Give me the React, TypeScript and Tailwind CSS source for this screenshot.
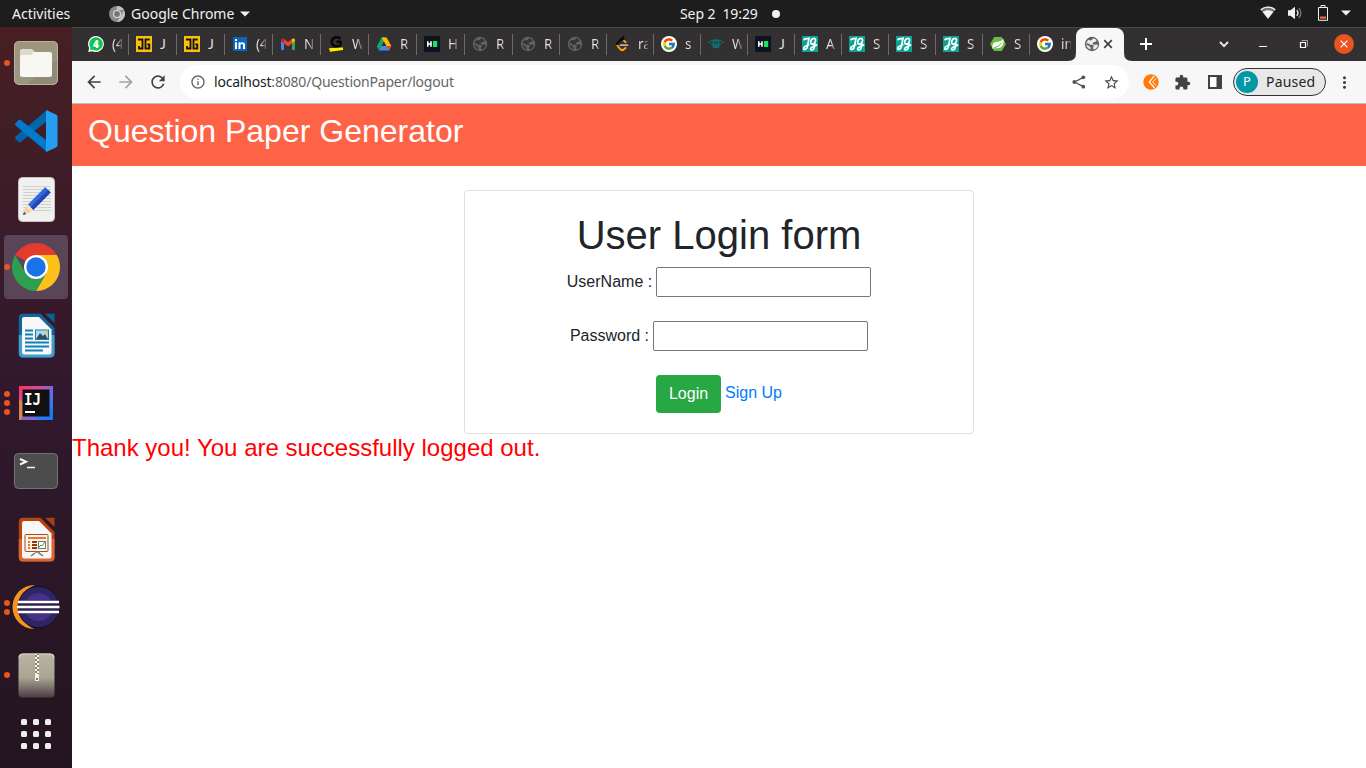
import type { ReactNode } from "react";
import { MdArrowBack, MdArrowForward, MdRefresh, MdInfoOutline, MdStarBorder, MdExtension, MdMoreVert } from "react-icons/md";
import { FcGoogle } from "react-icons/fc";

const WhatsApp = () => (
  <svg width="16" height="16" viewBox="0 0 16 16">
    <path d="M8 0a8 8 0 1 1-3.6 15.2L.3 16l.8-4A8 8 0 0 1 8 0z" fill="#fff" />
    <path d="M8 1.3a6.7 6.7 0 1 1-3.5 12.3L2 14.2l.5-2.4A6.7 6.7 0 0 1 8 1.3z" fill="#12c350" />
    <text x="8" y="11.6" textAnchor="middle" fontFamily="Open Sans, sans-serif" fontWeight="800" fontSize="10" fill="#fff">4</text>
  </svg>
);
const JavaGuides = () => (
  <svg width="16" height="16" viewBox="0 0 16 16">
    <rect width="16" height="16" fill="#fdc00a" />
    <path d="M2 3.500h4.500v9H3v-2.500M13.800 3.500H9.500v9h3.800V8.500h-2" fill="none" stroke="#151515" strokeWidth="1.900" />
  </svg>
);
const LinkedIn = () => (
  <svg width="16" height="16" viewBox="0 0 16 16">
    <rect x="1" y="1" width="14" height="14" rx="1" fill="#0a66c2" />
    <path d="M3 6.2h2V13H3zM3 3h2v2H3zM6.5 6.2h1.9v1c1-1.6 4.6-1.7 4.6 1.8v4h-2V9.5c0-2-2.5-1.8-2.5 0V13h-2z" fill="#fff" />
  </svg>
);
const Gmail = () => (
  <svg width="16" height="16" viewBox="0 0 16 16">
    <path d="M1 5l3 2v7H2a1 1 0 0 1-1-1z" fill="#4285f4" />
    <path d="M15 5l-3 2v7h2a1 1 0 0 0 1-1z" fill="#34a853" />
    <path d="M1 5V4c0-1.4 1.5-2 2.6-1.2L4 3v4.3L1 5z" fill="#c5221f" />
    <path d="M15 5V4c0-1.4-1.5-2-2.6-1.2L12 3v4.3L15 5z" fill="#fbbc04" />
    <path d="M4 3l4 3 4-3v4.4l-4 3-4-3z" fill="#ea4335" />
  </svg>
);
const Grepper = () => (
  <svg width="16" height="16" viewBox="0 0 16 16">
    <path d="M12.5 2.8C9.500 0 3.800 1 3.800 5.800c0 4.800 5.600 5.700 8.700 3.300V5.700H8.400" fill="none" stroke="#080808" strokeWidth="2.500" />
    <path d="M1 12.300l14-.9v2.600l-13 1.700z" fill="#fff000" />
  </svg>
);
const Drive = () => (
  <svg width="16" height="16" viewBox="0 0 16 16">
    <path d="M5.5 1.5h5L5.3 10.2 3 14.4.8 10.2z" fill="#11a861" />
    <path d="M5.5 1.5h5l4.8 8.5h-5z" fill="#ffbb00" />
    <path d="M3 14.4L5.4 10h9.9L13 14.4z" fill="#4688f4" />
    <path d="M10.4 10h4.9L13 14.2z" fill="#ea4335" />
    <path d="M8 6l2.3 4H5.6z" fill="#333031" />
  </svg>
);
const HackerRank = () => (
  <svg width="16" height="16" viewBox="0 0 16 16">
    <rect width="16" height="16" fill="#0b1420" />
    <path d="M3.8 5.3v5.4M7 5.3v5.4M3.8 8H7" stroke="#fff" strokeWidth="1.6" />
    <rect x="9" y="5" width="4.2" height="6" fill="#12e85f" />
  </svg>
);
const Globe = ({ color, land }: { color: string; land: string }) => (
  <svg width="16" height="16" viewBox="0 0 16 16">
    <circle cx="8" cy="8" r="7.200" fill={color} />
    <path d="M9.200 2.200c1.400.3 2.600 1 3.500 2.100l-1.200 1.500-2 .5-1 1.400 1.700 1 3-.2.800 1.200c-.7 1.800-2.200 3.300-4.300 3.800l-.9-1.700 1.300-1.900-1.500-1.200H6.300L3.700 7 2.300 8.400C2.400 6.500 3.200 4.900 4.500 3.800l1.600.6 1.700-.5z" fill={land} opacity=".92" />
    <path d="M2.300 8.600l3 1.500 1.400 1.600-.3 1.800C4 12.800 2.500 11 2.300 8.600z" fill={land} opacity=".85" />
  </svg>
);
const DimGlobe = () => <Globe color="#5f6368" land="#333031" />;
const LeetCode = () => (
  <svg width="16" height="16" viewBox="0 0 16 16">
    <path d="M9.5 1L3.5 7c-1 1-1 2.2 0 3.2" fill="none" stroke="#090909" strokeWidth="2" strokeLinecap="round" />
    <path d="M6 4.4l2-1c1-.3 2 .5 3 1.4" fill="none" stroke="#090909" strokeWidth="1.7" />
    <path d="M3.3 9.7l3.2 3.6c1 1 2.5 1 3.5 0l1.5-1.4M11.5 6.1L10 4.8" fill="none" stroke="#ffa116" strokeWidth="2" strokeLinecap="round" />
    <path d="M6.5 9.2h7" stroke="#b3b3b3" strokeWidth="1.7" strokeLinecap="round" />
  </svg>
);
const Google = () => (
  <span className="flex size-4 items-center justify-center rounded-full bg-white"><FcGoogle size={14} /></span>
);
const Eye = () => (
  <svg width="16" height="16" viewBox="0 0 16 16" fill="none" stroke="#087b7d">
    <path d="M.4 6.6C3.4 3 12.6 3 15.6 6.6M1.5 5.800c3 4.800 10 4.800 13 0" strokeWidth="1" />
    <circle cx="8" cy="7.700" r="3" strokeWidth="1.200" /><circle cx="8" cy="7.700" r="1" strokeWidth="1" />
    <path d="M4.300 10.500l2 1.300 1.700-.7 1.700.7 2-1.300" />
  </svg>
);
const Jg = () => (
  <svg width="16" height="16" viewBox="0 0 16 16">
    <rect width="16" height="16" fill="#0aa395" />
    <g fill="none" stroke="#fff" strokeWidth="1.7" strokeLinecap="round">
      <path d="M2 3.600c1.400-1.500 3.600-.8 5-1.200L5.400 10.400c-.5 3.400-4 4-3.700 1.700.3-1.600 3-2.300 5.100-3.500" />
      <path d="M13.500 4.800c.8-3.800-4.700-2.800-4.800 1.300 0 3.400 3.700 2.300 4.400-.4l-1 6.200c-.5 2.600-3.700 2.700-3.500.8.2-1.800 4-2.200 6-3.700" />
    </g>
  </svg>
);
const Spring = () => (
  <svg width="16" height="16" viewBox="0 0 16 16">
    <path d="M4.200 1h7.600L16 8l-4.200 7H4.200L0 8z" fill="#68bd45" />
    <path d="M13.400 2.700c.9 5.200-1 9.500-6 9.500H3.600l-1 .8c-.9-4.800 1-7.200 4.800-7.300 3-.1 4.800-.9 6-3z" fill="#fff" />
    <path d="M3.600 12c3.600-1 6.500-2.600 8-5.300" stroke="#68bd45" fill="none" />
  </svg>
);

type Tab = { icon: ReactNode; label: string };
const tabs: Tab[] = [
  { icon: <WhatsApp />, label: "(4" },
  { icon: <JavaGuides />, label: "J" },
  { icon: <JavaGuides />, label: "J" },
  { icon: <LinkedIn />, label: "(4" },
  { icon: <Gmail />, label: "N" },
  { icon: <Grepper />, label: "W" },
  { icon: <Drive />, label: "R" },
  { icon: <HackerRank />, label: "H" },
  { icon: <DimGlobe />, label: "R" },
  { icon: <DimGlobe />, label: "R" },
  { icon: <DimGlobe />, label: "R" },
  { icon: <LeetCode />, label: "ra" },
  { icon: <Google />, label: "s" },
  { icon: <Eye />, label: "W" },
  { icon: <HackerRank />, label: "J" },
  { icon: <Jg />, label: "A" },
  { icon: <Jg />, label: "S" },
  { icon: <Jg />, label: "S" },
  { icon: <Jg />, label: "S" },
  { icon: <Spring />, label: "S" },
  { icon: <Google />, label: "in" },
];

function TopBar() {
  return (
    <div className="flex h-[27px] shrink-0 items-center bg-[#1d1d1d] text-[14px] text-[#f2f2f2]">
      <span className="w-[97px] pl-3">Activities</span>
      <span className="flex w-[571px] items-center pl-3">
        <svg width="16" height="16" viewBox="0 0 16 16">
          <circle cx="8" cy="8" r="8" fill="#8b8b8b" />
          <path d="M8 0a8 8 0 0 1 7 4.1H8zM15 4.2A8 8 0 0 1 8 16l3.7-6z" fill="#c2c2c2" />
          <circle cx="8" cy="8" r="4" fill="#dedede" /><circle cx="8" cy="8" r="2.9" fill="#777" />
        </svg>
        <span className="ml-[6px] w-[105px] whitespace-nowrap">Google Chrome</span>
        <svg className="ml-[3px]" width="12" height="6" viewBox="0 0 12 6"><path d="M1 .5h10L6 5.5z" fill="#f2f2f2" /></svg>
      </span>
      <span className="w-[80px] pl-3 whitespace-pre tracking-[-0.1px]">Sep 2  19:29</span>
      <span className="ml-[24px] size-2 rounded-full bg-[#f2f2f2]" />
      <span className="ml-auto flex items-center pr-[15px] pb-px">
        <svg width="16" height="14" viewBox="0 0 16 14">
          <path d="M.3 3.500C4.500-.4 11.500-.4 15.700 3.500L8 13z" fill="#777" />
          <path d="M.8 3.700C5 .3 11 .3 15.200 3.700" fill="none" stroke="#f2f2f2" strokeWidth="1.400" />
          <path d="M2.800 6C5.600 3.600 10.400 3.600 13.200 6L8 12.800z" fill="#f2f2f2" />
        </svg>
        <svg className="ml-3" width="16" height="14" viewBox="0 0 16 14">
          <path d="M0 4.300h2.500L7 .8v12.400L2.500 9.700H0z" fill="#f2f2f2" />
          <path d="M8.800 4.200c1.400 1.700 1.400 3.900 0 5.600" stroke="#f2f2f2" strokeWidth="1.300" fill="none" />
          <path d="M10.800 2.200c2.800 2.800 2.800 6.800 0 9.600" stroke="#858585" strokeWidth="1.200" fill="none" />
        </svg>
        <svg className="ml-[14px]" width="10" height="16" viewBox="0 0 10 16">
          <path d="M.5 2.500h9v12.800h-9zM3 2V.5h4V2" fill="none" stroke="#f2f2f2" />
          <rect x="2" y="11.500" width="6" height="2.200" fill="#f06a32" />
        </svg>
        <svg className="ml-[13px]" width="10" height="6" viewBox="0 0 10 6"><path d="M0 .5h10L5 5.5z" fill="#f2f2f2" /></svg>
      </span>
    </div>
  );
}

const Files = () => (
  <svg width="48" height="48" viewBox="0 0 48 48">
    <rect x="2" y="2" width="44" height="44" rx="5" fill="#918a76" />
    <path d="M7 2h34a5 5 0 0 1 5 5v13L15 45H7a5 5 0 0 1-5-5V7a5 5 0 0 1 5-5z" fill="#9c9580" />
    <rect x="2.500" y="2.500" width="43" height="43" rx="5" fill="none" stroke="#b9b4a2" />
    <path d="M8 17v-5q0-2 2-2h10l4 4h14v8z" fill="#dedac9" />
    <path d="M8 18q0-2 2-2h9l3-3h16q2 0 2 2v21q0 2-2 2H10q-2 0-2-2z" fill="#f8f7f4" />
  </svg>
);
const VsCode = () => (
  <svg width="44" height="44" viewBox="0 0 44 44">
    <path d="M1.500 27.500q-1 1 0 2.200l3 3.400q1 .8 2.200-.1L33 12V1z" fill="#0065a9" />
    <path d="M1.500 16.500q-1-1 0-2.200l3-3.400q1-.8 2.200.1L33 32v11z" fill="#007acc" />
    <path d="M32 1l10 4.500q1.500.7 1.500 2.400v28.200q0 1.700-1.500 2.400L32 43z" fill="#249ff2" />
  </svg>
);
const Editor = () => (
  <svg width="37" height="45" viewBox="0 0 37 45">
    <rect x=".5" y=".5" width="36" height="44" rx="4" fill="#f0f0ef" stroke="#c4c4c4" />
    <path d="M5 9.500h28M5 12.500h28M5 15.500h28M5 18.500h28M5 21.500h28M5 24.500h28M5 27.500h28M5 30.500h28M5 33.500h28" stroke="#cfcfcf" />
    <path d="M5 38l2.500-8 5.200 5z" fill="#f2cda0" /><path d="M5 38l1-3 2 2z" fill="#303030" />
    <path d="M10 27.500L27.200 10l5.400 5.600L15.200 33z" fill="#3268dd" />
    <path d="M12.800 30.300L30 12.800l2.600 2.800L15.200 33z" fill="#2148b5" />
    <path d="M9.700 27.500l5.600 5.700-2.400 1.800-5.400-5z" fill="#ffdcb8" />
  </svg>
);
const Chrome = () => (
  <svg width="48" height="48" viewBox="0 0 48 48">
    <path d="M24 24L3.220 12A24 24 0 0 1 44.780 12z" fill="#e33b2e" />
    <path d="M24 12h20.780A24 24 0 0 1 24 48L34.400 30z" fill="#fcc21b" />
    <path d="M24 48A24 24 0 0 1 3.220 12L13.600 30a12 12 0 0 0 20.800 0z" fill="#2e9e4f" />
    <circle cx="24" cy="24" r="12" fill="#fff" /><circle cx="24" cy="24" r="9.700" fill="#1a73e8" />
  </svg>
);
const OfficePage = ({ kind }: { kind: "writer" | "impress" }) => {
  const w = kind === "writer";
  return (
    <svg width="37" height="45" viewBox="0 0 37 45">
      <path d="M5 .8h17.500L36.500 15v25q0 4.500-4.500 4.500H5Q.8 44.500.8 40V5Q.8.8 5 .8z" fill={w ? "#10669f" : "#b9430d"} />
      <path d="M.8 22h35.700v18q0 4.500-4.500 4.500H5Q.8 44.500.8 40z" fill={w ? "#419dca" : "#dc642f"} />
      <path d="M6 4h15l12.500 12.500V39q0 2.500-2.500 2.500H6.500Q4 41.500 4 39V6q0-2 2-2z" fill="#f8f8f8" />
      <path d="M27 .8h9.500V10z" fill={w ? "#096494" : "#a63e0f"} />
      {w ? (
        <g>
          <path d="M7 17.500h8M7 21.500h8M7 25.500h8M7 29.500h24M7 33.500h24M7 37.500h18" stroke="#1080ba" strokeWidth="2" />
          <rect x="17.500" y="17" width="13" height="9.500" fill="#a6dcf5" stroke="#147eb3" />
          <path d="M18 26l4-6 3 3 2-2 3 5z" fill="#414d55" /><path d="M27 17.500h3v4z" fill="#fcba12" />
        </g>
      ) : (
        <g>
          <rect x="7" y="17.500" width="23" height="17" rx="1" fill="#fff1e4" stroke="#a64b20" />
          <path d="M10 21h18" stroke="#df7b36" strokeWidth="2" />
          <path d="M10 25h2M10 28h2M10 31h2" stroke="#df7b36" strokeWidth="2" /><path d="M14 25h5M14 28h5M14 31h5" stroke="#883a15" strokeWidth="2" />
          <rect x="20.500" y="24.500" width="7" height="7" fill="#fff" stroke="#77777a" /><path d="M21 30l2-2 1 1 3-4" fill="none" stroke="#37a439" />
          <path d="M17 35h4v1l4 3M17 36l-4 3" stroke="#777" fill="none" strokeWidth="1.500" />
        </g>
      )}
    </svg>
  );
};
const IntelliJ = () => (
  <svg width="34" height="34" viewBox="0 0 34 34">
    <defs><linearGradient id="ij" x1="0" y1="0" x2="1" y2="1"><stop stopColor="#ff315d" /><stop offset=".35" stopColor="#c651a0" /><stop offset=".6" stopColor="#5375e7" /><stop offset="1" stopColor="#087cfa" /></linearGradient></defs>
    <rect width="34" height="34" fill="url(#ij)" />
    <path d="M0 13l5 4-1 17H0z" fill="#d78651" /><path d="M3 31h12l4 3H2z" fill="#8963bd" />
    <rect x="3.500" y="3.500" width="27" height="27" fill="#111" />
    <path d="M6 26h10" stroke="#fff" strokeWidth="2" />
    <text x="5" y="19" fontFamily="DejaVu Sans Mono, monospace" fontWeight="700" fontSize="16" textLength="17" lengthAdjust="spacingAndGlyphs" fill="#fff">IJ</text>
  </svg>
);
const Terminal = () => (
  <svg width="46" height="38" viewBox="0 0 46 38">
    <rect x="1.500" y="1.500" width="43" height="35" rx="4" fill="#4c4c4c" stroke="#737373" />
    <path d="M7 7l6 2.700L7 12.500" fill="none" stroke="#f7f7f7" strokeWidth="2" /><path d="M14 15.500h8" stroke="#f7f7f7" strokeWidth="1.500" />
  </svg>
);
const Eclipse = () => (
  <svg width="48" height="44" viewBox="0 0 48 44">
    <path d="M23 0A22 22 0 0 0 22 44 24 24 0 0 1 23 0z" fill="#f79420" />
    <circle cx="26.500" cy="22" r="21" fill="#17112f" /><circle cx="26.500" cy="22" r="20" fill="#302563" />
    <circle cx="26.500" cy="22" r="14" fill="#43318a" />
    <path d="M6 15.500h41v13H6z" fill="#2c2255" />
    <path d="M6 17h41M5 22h42.500M6 27h41" stroke="#fff" strokeWidth="2.300" />
  </svg>
);
const Archive = () => (
  <svg width="37" height="45" viewBox="0 0 37 45">
    <defs><linearGradient id="zip" x1="0" y1="0" x2="0" y2="1"><stop stopColor="#b9b3a2" /><stop offset=".55" stopColor="#aaa591" /><stop offset="1" stopColor="#4a3c45" /></linearGradient>
      <pattern id="teeth" width="4" height="4" patternUnits="userSpaceOnUse"><rect width="4" height="4" fill="#8c8676" /><path d="M1 0h2v2H1zM3 2h2v2H3zM-1 2h2v2h-2z" fill="#f2f1ec" /></pattern></defs>
    <rect x=".5" y=".5" width="36" height="44" rx="4" fill="url(#zip)" />
    <path d="M1 5q0-4 4-4h27q4 0 4 4" fill="none" stroke="#ddd7c8" />
    <path d="M17 1h4v20h-4z" fill="url(#teeth)" /><path d="M17 21h4v7h-4z" fill="#f2f1ec" /><path d="M18 25h2v2h-2z" fill="#777366" />
  </svg>
);

const dock: { icon: ReactNode; dots: number; active?: boolean }[] = [
  { icon: <Files />, dots: 1 },
  { icon: <VsCode />, dots: 0 },
  { icon: <Editor />, dots: 0 },
  { icon: <Chrome />, dots: 1, active: true },
  { icon: <OfficePage kind="writer" />, dots: 0 },
  { icon: <IntelliJ />, dots: 3 },
  { icon: <Terminal />, dots: 0 },
  { icon: <OfficePage kind="impress" />, dots: 0 },
  { icon: <Eclipse />, dots: 2 },
  { icon: <Archive />, dots: 1 },
];

function Dock() {
  return (
    <nav className="flex w-[72px] shrink-0 flex-col gap-1 bg-linear-to-b from-[#471f22] via-[#31182e] to-[#23151f] px-1 pt-1">
      {dock.map((d, i) => (
        <div key={i} className={d.active ? "flex h-16 shrink-0 items-center rounded-[4px] bg-[#594557]" : "flex h-16 shrink-0 items-center"}>
          <span className="flex w-[6px] flex-col gap-[3px]">
            {Array.from({ length: d.dots }, (_, n) => <i key={n} className="size-[6px] shrink-0 rounded-full bg-[#e95420]" />)}
          </span>
          <span className="flex w-[52px] shrink-0 items-center justify-center">{d.icon}</span>
        </div>
      ))}
      <div className="mx-auto mt-[8px] grid grid-cols-3 gap-[6px]">
        {Array.from({ length: 9 }, (_, i) => <i key={i} className="size-[6px] rounded-[1.5px] bg-[#f0eeeb]" />)}
      </div>
    </nav>
  );
}

function TabStrip() {
  return (
    <div className="flex h-[34px] shrink-0 border-t border-[#484647] bg-[#333031] pl-2">
      {tabs.map((t, i) => (
        <div key={i} className={i < 9 ? "flex w-12 shrink-0 items-center pb-px" : "flex w-[47px] shrink-0 items-center pb-px"}>
          <span className={i === 0 ? "h-[21px] w-px" : "h-[21px] w-px bg-[#6c6a6b]"} />
          <span className="ml-[7px] flex size-4 items-center justify-center">{t.icon}</span>
          <span className={t.label === "J"
            ? "ml-2 w-[11px] whitespace-nowrap pb-px font-['Lato'] text-[14px] leading-5 text-[#dedede]"
            : "ml-2 w-[10px] overflow-hidden whitespace-nowrap bg-linear-to-r from-[#e4e4e4] from-50% to-[#5b595a] bg-clip-text pb-px text-[13.5px] leading-5 text-transparent"}>{t.label}</span>
        </div>
      ))}
      <svg className="-ml-2 mt-auto shrink-0" width="8" height="8"><path d="M8 0v8H0q8 0 8-8z" fill="#f7f7f7" /></svg>
      <div className="flex w-12 shrink-0 items-center rounded-t-lg bg-[#f7f7f7] pb-px pl-2">
        <Globe color="#5f6368" land="#f7f7f7" />
        <svg className="ml-[3px]" width="10" height="10" viewBox="0 0 10 10"><path d="M1.200 1.200l7.600 7.600M8.800 1.200L1.200 8.800" stroke="#404246" strokeWidth="1.700" /></svg>
      </div>
      <svg className="mt-auto shrink-0" width="8" height="8"><path d="M0 0v8h8q-8 0-8-8z" fill="#f7f7f7" /></svg>
      <div className="flex flex-1 items-center pb-px">
        <svg className="ml-2" width="12" height="12" viewBox="0 0 12 12"><path d="M6 0v12M0 6h12" stroke="#fff" strokeWidth="2" /></svg>
        <svg className="ml-[67px]" width="10" height="7" viewBox="0 0 10 7"><path d="M1 1l4 4.200L9 1" fill="none" stroke="#e8e8e8" strokeWidth="1.900" /></svg>
        <svg className="ml-[29px]" width="10" height="6" viewBox="0 0 10 6"><path d="M1 5.500h8" stroke="#f3f3f3" /></svg>
        <svg className="ml-[31px]" width="9" height="9" viewBox="0 0 9 9" fill="none"><path d="M2.500.5h6v6" stroke="#a5a4a4" /><path d="M1.500 2.500h5v5h-5z" stroke="#fff" strokeWidth="1.200" /></svg>
        <span className="ml-[26px] flex size-5 items-center justify-center rounded-full bg-[#e95420]">
          <svg width="8" height="8" viewBox="0 0 8 8"><path d="M.6.6l6.800 6.800M7.400.6L.6 7.400" stroke="#fff" strokeWidth="1.300" /></svg>
        </span>
      </div>
    </div>
  );
}

function Toolbar() {
  return (
    <div className="flex h-[43px] shrink-0 items-center border-b border-[#bdbdbd] bg-[#f7f7f7] pl-3">
      <MdArrowBack size={20} color="#404346" />
      <MdArrowForward className="ml-3" size={20} color="#a1a3a5" />
      <MdRefresh className="ml-3" size={20} color="#404346" />
      <div className="ml-3 flex h-[34px] w-[949px] items-center rounded-full bg-white pl-[10px] text-[14px] text-[#646669]">
        <MdInfoOutline size={16} color="#5f6368" />
        <span className="ml-2 whitespace-nowrap pb-[2px] tracking-[-0.2px]"><span className="text-[#1b1c1e]">localhost</span>:8080/QuestionPaper/logout</span>
        <svg className="mr-[17px] ml-auto" width="14" height="14" viewBox="0 0 14 14">
          <path d="M11.500 2.300L2.500 7l9 4.700" fill="none" stroke="#505357" strokeWidth="1.300" />
          <circle cx="11.300" cy="2.300" r="1.900" fill="#505357" /><circle cx="2.300" cy="7" r="1.900" fill="#505357" /><circle cx="11.300" cy="11.700" r="1.900" fill="#505357" />
        </svg>
        <MdStarBorder className="mr-[9px]" size={17} color="#46494d" />
      </div>
      <svg className="ml-[14px]" width="16" height="16" viewBox="0 0 16 16">
        <circle cx="8" cy="8" r="7.700" fill="#ff7a09" />
        <path d="M11.300 1.800L6.300 8l5.200 6" fill="none" stroke="#fff" strokeWidth="1.200" />
        <path d="M13.200 4.300L9.600 8l3.400 3.600" fill="none" stroke="#fff" strokeWidth="1" />
      </svg>
      <MdExtension className="ml-[15px]" size={17} color="#404346" />
      <svg className="ml-[17px]" width="14" height="14" viewBox="0 0 14 14"><path d="M1 1h12v12H1z" fill="#fff" stroke="#404346" strokeWidth="2" /><path d="M8.500 0H14v14H8.500z" fill="#404346" /></svg>
      <div className="ml-[11px] flex h-[28px] w-[93px] items-center rounded-full border border-[#333] bg-[#e8e8e8] pl-[2px] text-[14px] text-[#252525]">
        <span className="flex size-[22px] items-center justify-center rounded-full bg-[#0097a7] text-[13px] text-white">P</span>
        <span className="ml-2 pb-px tracking-[0.2px]">Paused</span>
      </div>
      <MdMoreVert className="ml-[9px]" size={19} color="#404346" />
    </div>
  );
}

function Field({ label, type }: { label: string; type: string }) {
  return (
    <label className="mb-6 flex h-[30px] items-center justify-center gap-1 text-base">
      {label}
      <input type={type} className="h-[30px] w-[215px] rounded-[2px] border border-[#767676] bg-white px-1" />
    </label>
  );
}

function LoginPage() {
  return (
    <main className="flex-1 bg-white font-['Liberation_Sans',Arial,sans-serif] text-[#212529]">
      <header className="h-[62px] bg-[#ff6347] px-4 pt-2 text-[32px] leading-[38px] text-white">Question Paper Generator</header>
      <section className="mx-auto mt-6 h-[244px] w-[510px] rounded-[4px] border border-[#dfdfdf] p-5">
        <h1 className="mb-2 text-center text-[40px] leading-[48px]">User Login form</h1>
        <Field label="UserName :" type="text" />
        <Field label="Password :" type="password" />
        <div className="flex justify-center gap-1">
          <button className="h-[38px] w-[65px] rounded-[4px] bg-[#28a745] text-base text-white">Login</button>
          <a href="#" className="pt-[6px] leading-6 text-[#007bff]">Sign Up</a>
        </div>
      </section>
      <p className="text-2xl leading-[27px] text-[#ff0000]">Thank you! You are successfully logged out.</p>
    </main>
  );
}

export default function App() {
  return (
    <div className="flex h-screen w-screen flex-col overflow-hidden font-['Noto_Sans',sans-serif]">
      <TopBar />
      <div className="flex min-h-0 flex-1">
        <Dock />
        <div className="flex min-w-0 flex-1 flex-col">
          <TabStrip />
          <Toolbar />
          <LoginPage />
        </div>
      </div>
    </div>
  );
}
